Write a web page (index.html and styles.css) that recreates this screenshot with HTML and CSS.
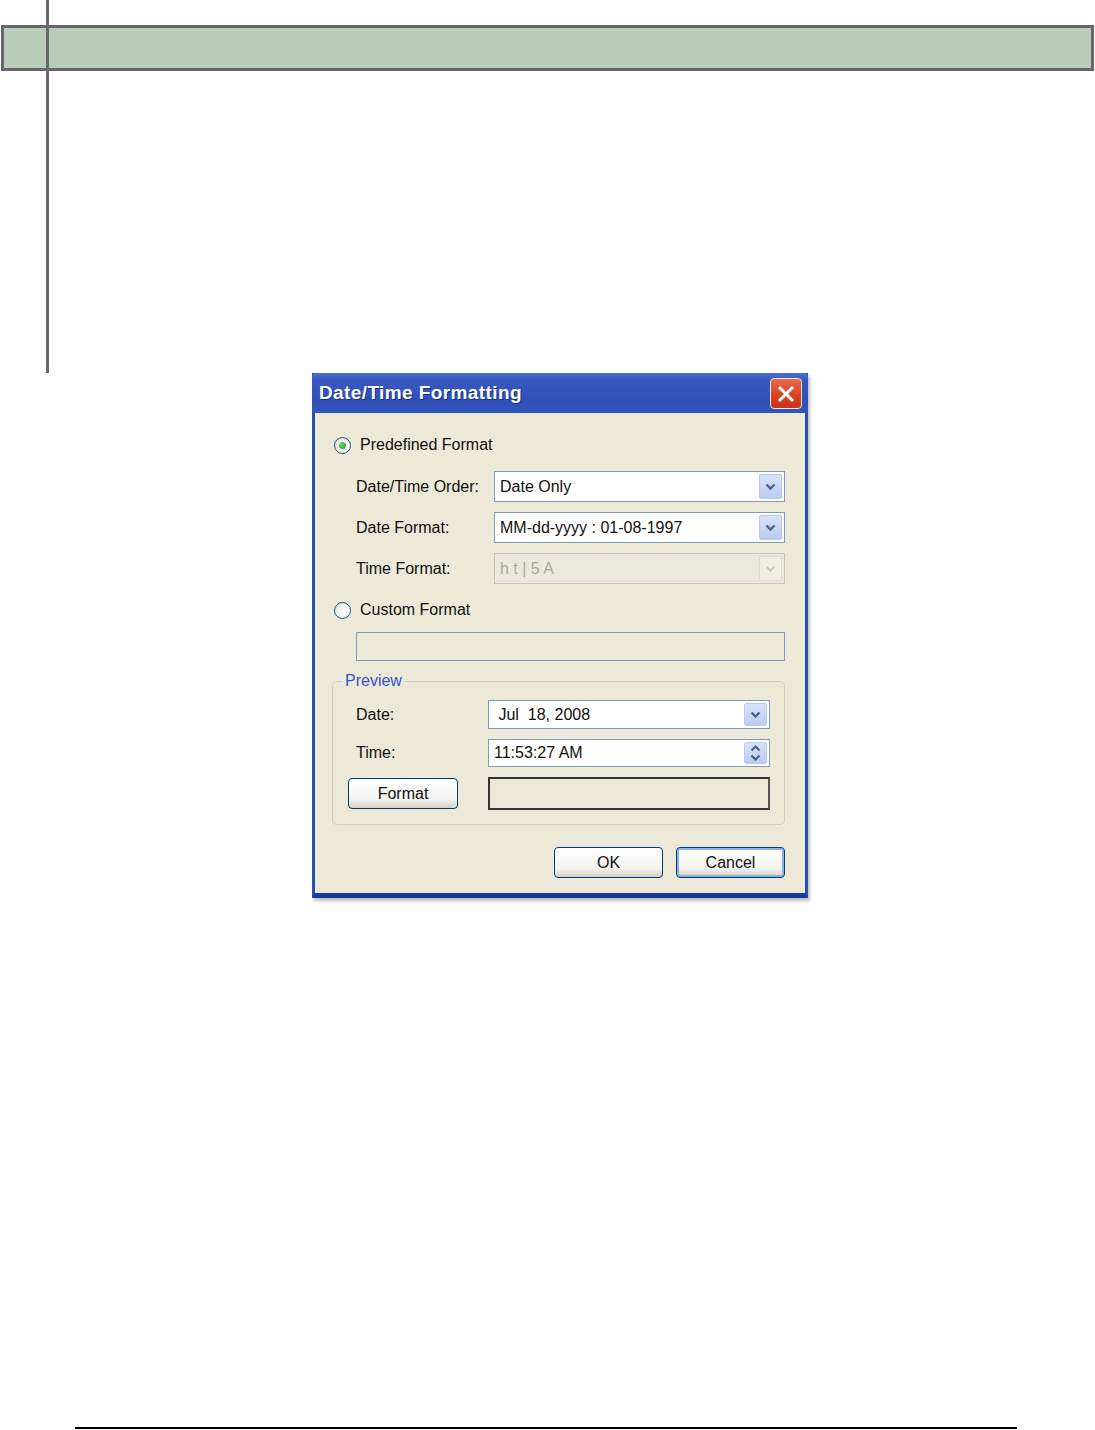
FILE: index.html
```html
<!DOCTYPE html>
<html lang="en">
<head>
    <meta charset="UTF-8">
    <title>Date/Time Formatting</title>
    <link rel="stylesheet" href="styles.css">
</head>
<body>
    <div class="page">
        <div class="vline"></div>
        <div class="band"></div>

        <div class="dialog">
            <div class="titlebar">
                <span class="title">Date/Time Formatting</span>
                <button class="close">
                    <svg width="18" height="18" viewBox="0 0 18 18">
                        <path d="M3 3 L15 15 M15 3 L3 15" stroke="#fff" stroke-width="3" stroke-linecap="square"/>
                    </svg>
                </button>
            </div>
            <div class="body">
                <div class="radio-row">
                    <span class="radio checked"></span>
                    <span>Predefined Format</span>
                </div>

                <div class="fields">
                    <label>Date/Time Order:</label>
                    <div class="combo">
                        <span class="value">Date Only</span>
                        <span class="drop"><svg width="11" height="8" viewBox="0 0 11 8"><path d="M1.5 1.5 L5.5 5.5 L9.5 1.5" stroke="#4d6185" stroke-width="2.4" fill="none"/></svg></span>
                    </div>
                    <label>Date Format:</label>
                    <div class="combo">
                        <span class="value">MM-dd-yyyy : 01-08-1997</span>
                        <span class="drop"><svg width="11" height="8" viewBox="0 0 11 8"><path d="M1.5 1.5 L5.5 5.5 L9.5 1.5" stroke="#4d6185" stroke-width="2.4" fill="none"/></svg></span>
                    </div>
                    <label>Time Format:</label>
                    <div class="combo disabled">
                        <span class="value">h t | 5 A</span>
                        <span class="drop"><svg width="11" height="8" viewBox="0 0 11 8"><path d="M1.5 1.5 L5.5 5.5 L9.5 1.5" stroke="#c9c7ba" stroke-width="2" fill="none"/></svg></span>
                    </div>
                </div>

                <div class="radio-row custom">
                    <span class="radio"></span>
                    <span>Custom Format</span>
                </div>
                <div class="textbox"></div>

                <fieldset class="preview">
                    <legend>Preview</legend>
                    <div class="preview-grid">
                        <label>Date:</label>
                        <div class="combo">
                            <span class="value">&nbsp;Jul&nbsp; 18, 2008</span>
                            <span class="drop"><svg width="11" height="8" viewBox="0 0 11 8"><path d="M1.5 1.5 L5.5 5.5 L9.5 1.5" stroke="#4d6185" stroke-width="2.4" fill="none"/></svg></span>
                        </div>
                        <label>Time:</label>
                        <div class="combo">
                            <span class="value">11:53:27 AM</span>
                            <span class="spin">
                                <svg width="11" height="7" viewBox="0 0 11 7"><path d="M1.5 5.5 L5.5 1.5 L9.5 5.5" stroke="#4d6185" stroke-width="2.2" fill="none"/></svg>
                                <svg width="11" height="7" viewBox="0 0 11 7"><path d="M1.5 1.5 L5.5 5.5 L9.5 1.5" stroke="#4d6185" stroke-width="2.2" fill="none"/></svg>
                            </span>
                        </div>
                        <button class="btn">Format</button>
                        <div class="outbox"></div>
                    </div>
                </fieldset>

                <div class="actions">
                    <button class="btn">OK</button>
                    <button class="btn default">Cancel</button>
                </div>
            </div>
        </div>

        <div class="footer-line"></div>
    </div>
</body>
</html>
```
FILE: styles.css
```css
body, html {
    margin: 0;
    padding: 0;
    background-color: #ffffff;
    font-family: "Liberation Sans", Arial, sans-serif;
}
.page {
    position: relative;
    width: 1095px;
    height: 1430px;
    padding-top: 25px;
    box-sizing: border-box;
}
.vline {
    position: absolute;
    left: 46px;
    top: 0;
    width: 3px;
    height: 373px;
    background-color: #66666e;
}
.band {
    margin: 0 1px;
    height: 40px;
    border: 3px solid #66666e;
    background-color: #b8ccb8;
}
.footer-line {
    margin: 529px 0 0 75px;
    width: 942px;
    height: 2px;
    background-color: #000;
}

/* dialog window */
.dialog {
    margin: 302px 0 0 312px;
    width: 496px;
    box-sizing: border-box;
    border: 3px solid #2c4fb6;
    border-top: 0;
    border-bottom: 5px solid #1b3a98;
    background-color: #ece9d8;
    box-shadow: 2px 3px 3px rgba(0, 0, 0, 0.25);
    color: #111;
    font-size: 16px;
}
.titlebar {
    height: 40px;
    margin: 0 -3px;
    padding: 0 6px 0 7px;
    display: flex;
    align-items: center;
    justify-content: space-between;
    background: linear-gradient(#4a6fd0 0%, #3658c0 20%, #2e50b6 70%, #3356bd 100%);
    border-radius: 4px 4px 0 0;
}
.title {
    color: #fff;
    font-weight: bold;
    font-size: 19px;
    letter-spacing: 0.4px;
    text-shadow: 1px 1px 0 #1a2f78;
}
.close {
    width: 32px;
    height: 31px;
    padding: 0;
    display: flex;
    align-items: center;
    justify-content: center;
    border: 1px solid #f2e8e4;
    border-radius: 4px;
    background: linear-gradient(#ea6a4c, #d8401f 60%, #c83418);
    margin-top: 1px;
}

.body {
    padding: 20px 20px 15px 17px;
}
.radio-row {
    height: 24px;
    display: flex;
    align-items: center;
    gap: 9px;
    padding-left: 2px;
}
.radio-row.custom {
    margin-top: 14px;
}
.radio {
    width: 17px;
    height: 17px;
    box-sizing: border-box;
    border-radius: 50%;
    border: 1px solid #1d5281;
    background: radial-gradient(circle at 65% 65%, #ffffff 20%, #dcdcd6 90%);
    display: flex;
    align-items: center;
    justify-content: center;
}
.radio.checked::after {
    content: "";
    width: 7px;
    height: 7px;
    border-radius: 50%;
    background: radial-gradient(circle at 35% 35%, #6fd36f, #21a121);
}

.fields {
    margin: 14px 0 0 24px;
    display: grid;
    grid-template-columns: 138px 291px;
    grid-auto-rows: 31px;
    row-gap: 10px;
    align-items: center;
}
.combo {
    height: 100%;
    box-sizing: border-box;
    border: 1px solid #7f9db9;
    background-color: #fff;
    display: flex;
    align-items: center;
    justify-content: space-between;
    padding: 2px 2px 2px 5px;
}
.combo .value {
    white-space: pre;
}
.drop, .spin {
    width: 21px;
    align-self: stretch;
    display: flex;
    flex-direction: column;
    align-items: center;
    justify-content: center;
    background: linear-gradient(#d8e2fa, #bccbf2);
    border: 1px solid #b9c8ef;
    border-radius: 2px;
}
.spin {
    gap: 2px;
    justify-content: center;
}
.combo.disabled {
    background-color: #ebe9dc;
    border-color: #c9c7ba;
    color: #aca899;
}
.combo.disabled .drop {
    background: #f1efe4;
    border-color: #dedbcd;
}

.textbox {
    margin: 10px 0 0 24px;
    width: 429px;
    height: 29px;
    box-sizing: border-box;
    border: 1px solid #7f9db9;
}

.preview {
    margin: 10px 0 0 0;
    padding: 9px 14px 14px 15px;
    border: 1px solid #d0d0bf;
    border-radius: 5px;
}
.preview legend {
    color: #2f55c8;
    padding: 0 2px;
    margin-left: -5px;
    line-height: 20px;
}
.preview-grid {
    display: grid;
    grid-template-columns: 140px 282px;
    grid-template-rows: 29px 28px 33px;
    row-gap: 10px;
    align-items: center;
}
.preview-grid label {
    padding-left: 8px;
}
.preview-grid .btn {
    width: 110px;
    height: 31px;
    align-self: center;
}
.outbox {
    height: 33px;
    box-sizing: border-box;
    border: 2px solid #333;
    border-right-color: #555;
}

.btn {
    width: 109px;
    height: 31px;
    font-family: inherit;
    font-size: 16px;
    color: #111;
    border: 1px solid #003c74;
    border-radius: 4px;
    background: linear-gradient(#ffffff, #f3f3ee 70%, #d6d0c5);
    cursor: pointer;
}
.btn.default {
    box-shadow: inset 0 0 0 2px #8fb0ee;
}
.actions {
    margin-top: 22px;
    display: flex;
    justify-content: flex-end;
    gap: 13px;
}
```
